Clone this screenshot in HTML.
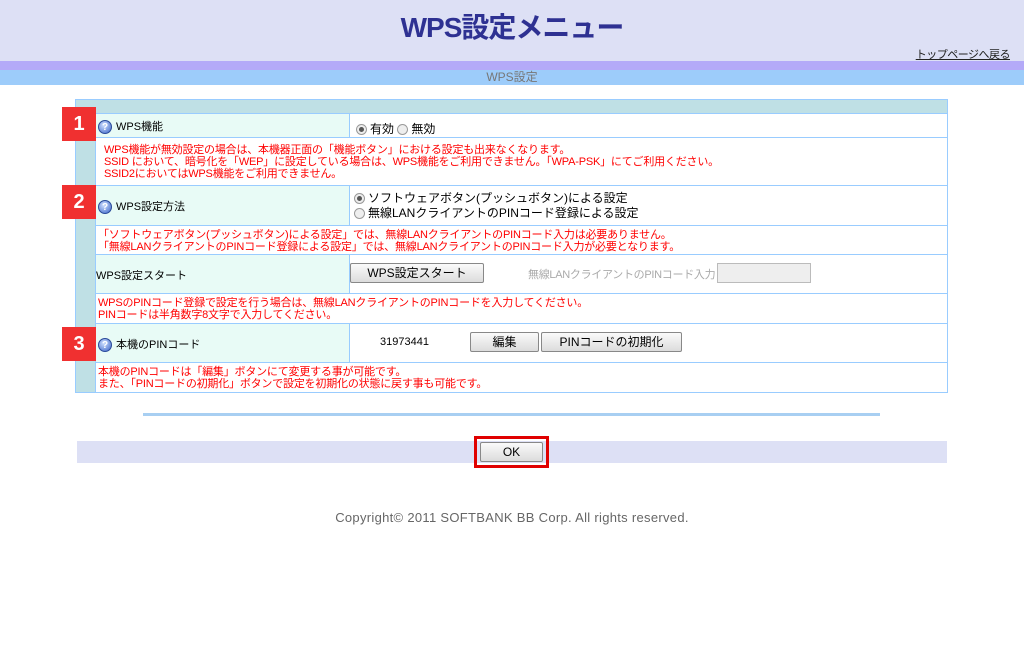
<!DOCTYPE html>
<html><head><meta charset="utf-8"><style>
*{margin:0;padding:0;box-sizing:border-box}
body{width:1024px;height:653px;background:#fff;position:relative;font-family:"Liberation Sans","Noto Sans CJK JP",sans-serif;font-size:11px;color:#000;overflow:hidden}
.a{position:absolute}
.cell{position:absolute;border:1px solid #99ccff}
.lab{background:#e8fbf6}
.red{color:#f00;font-size:11px;line-height:12px;letter-spacing:-0.2px}
.num{position:absolute;left:62px;width:34px;height:34px;background:#f03030;color:#fff;font-weight:bold;font-size:20px;text-align:center;line-height:34px}
.q{display:inline-block;width:14px;height:14px;border-radius:50%;background:radial-gradient(circle at 40% 35%,#cfe0ff,#3a64c8);color:#fff;font-size:10px;font-weight:bold;text-align:center;line-height:13px;vertical-align:middle;margin-right:4px;border:1px solid #2a4a9a}
.rad{display:inline-block;width:11px;height:11px;border-radius:50%;border:1px solid #999;background:#eee;vertical-align:middle;margin-right:3px;position:relative}
.rad.on::after{content:"";position:absolute;left:2px;top:2px;width:5px;height:5px;border-radius:50%;background:#555}
.btn{position:absolute;height:20px;border:1px solid #888;border-radius:2px;background:linear-gradient(#fafafa,#dcdcdc);font-size:12px;text-align:center;line-height:18px}
</style></head><body>
<div class="a" style="left:0;top:0;width:1024px;height:61px;background:#dde0f5"></div>
<div class="a" style="left:0;top:6px;width:1024px;text-align:center;font-size:28px;font-weight:bold;color:#2e3192;letter-spacing:-1px">WPS設定メニュー</div>
<div class="a" style="right:14px;top:46px;font-size:11px;text-decoration:underline;color:#222;letter-spacing:-0.5px">トップページへ戻る</div>
<div class="a" style="left:0;top:61px;width:1024px;height:9px;background:#b4aaf8"></div>
<div class="a" style="left:0;top:70px;width:1024px;height:15px;background:#9dccfa;text-align:center;color:#777;font-size:12px;line-height:15px">WPS設定</div>

<div class="a" style="left:75px;top:99px;width:873px;height:294px;background:#bfe0e5;border:1px solid #99ccff"></div>

<div class="cell lab" style="left:95px;top:113px;width:255px;height:25px;padding:4px 2px"><span class="q">?</span>WPS機能</div>
<div class="cell" style="left:349px;top:113px;width:599px;height:25px;background:#fff;padding:6px 6px;font-size:12px"><span class="rad on"></span>有効 <span class="rad"></span>無効</div>
<div class="cell red" style="left:95px;top:137px;width:853px;height:49px;background:#fff;padding:6px 8px">WPS機能が無効設定の場合は、本機器正面の「機能ボタン」における設定も出来なくなります。<br>SSID において、暗号化を「WEP」に設定している場合は、WPS機能をご利用できません。「WPA-PSK」にてご利用ください。<br>SSID2においてはWPS機能をご利用できません。</div>

<div class="cell lab" style="left:95px;top:185px;width:255px;height:41px;padding:12px 2px"><span class="q">?</span>WPS設定方法</div>
<div class="cell" style="left:349px;top:185px;width:599px;height:41px;background:#fff;padding:5px 4px;font-size:12px;line-height:15px"><span class="rad on"></span>ソフトウェアボタン(プッシュボタン)による設定<br><span class="rad"></span>無線LANクライアントのPINコード登録による設定</div>
<div class="cell red" style="left:95px;top:225px;width:853px;height:30px;background:#fff;padding:3px 2px">「ソフトウェアボタン(プッシュボタン)による設定」では、無線LANクライアントのPINコード入力は必要ありません。<br>「無線LANクライアントのPINコード登録による設定」では、無線LANクライアントのPINコード入力が必要となります。</div>

<div class="cell lab" style="left:95px;top:254px;width:255px;height:40px;padding:12px 0">WPS設定スタート</div>
<div class="cell" style="left:349px;top:254px;width:599px;height:40px;background:#fff"></div>
<div class="btn" style="left:350px;top:263px;width:134px">WPS設定スタート</div>
<div class="a" style="left:528px;top:266px;color:#aaa;font-size:11px;letter-spacing:-0.3px">無線LANクライアントのPINコード入力</div>
<div class="a" style="left:717px;top:263px;width:94px;height:20px;background:#eee;border:1px solid #bbb"></div>
<div class="cell red" style="left:95px;top:293px;width:853px;height:31px;background:#fff;padding:3px 2px">WPSのPINコード登録で設定を行う場合は、無線LANクライアントのPINコードを入力してください。<br>PINコードは半角数字8文字で入力してください。</div>

<div class="cell lab" style="left:95px;top:323px;width:255px;height:40px;padding:12px 2px"><span class="q">?</span>本機のPINコード</div>
<div class="cell" style="left:349px;top:323px;width:599px;height:40px;background:#fff"></div>
<div class="a" style="left:380px;top:336px;font-size:11px">31973441</div>
<div class="btn" style="left:470px;top:332px;width:69px">編集</div>
<div class="btn" style="left:541px;top:332px;width:141px">PINコードの初期化</div>
<div class="cell red" style="left:95px;top:362px;width:853px;height:31px;background:#fff;padding:3px 2px">本機のPINコードは「編集」ボタンにて変更する事が可能です。<br>また、「PINコードの初期化」ボタンで設定を初期化の状態に戻す事も可能です。</div>

<div class="num" style="top:107px">1</div>
<div class="num" style="top:185px">2</div>
<div class="num" style="top:327px">3</div>

<div class="a" style="left:143px;top:413px;width:737px;height:3px;background:#a8cff2"></div>
<div class="a" style="left:77px;top:441px;width:870px;height:22px;background:#dde0f5"></div>
<div class="a" style="left:474px;top:436px;width:75px;height:32px;border:3px solid #e00000"></div>
<div class="btn" style="left:480px;top:442px;width:63px">OK</div>
<div class="a" style="left:0;top:510px;width:1024px;text-align:center;color:#666;font-size:13px;letter-spacing:0.3px">Copyright© 2011 SOFTBANK BB Corp. All rights reserved.</div>
</body></html>
